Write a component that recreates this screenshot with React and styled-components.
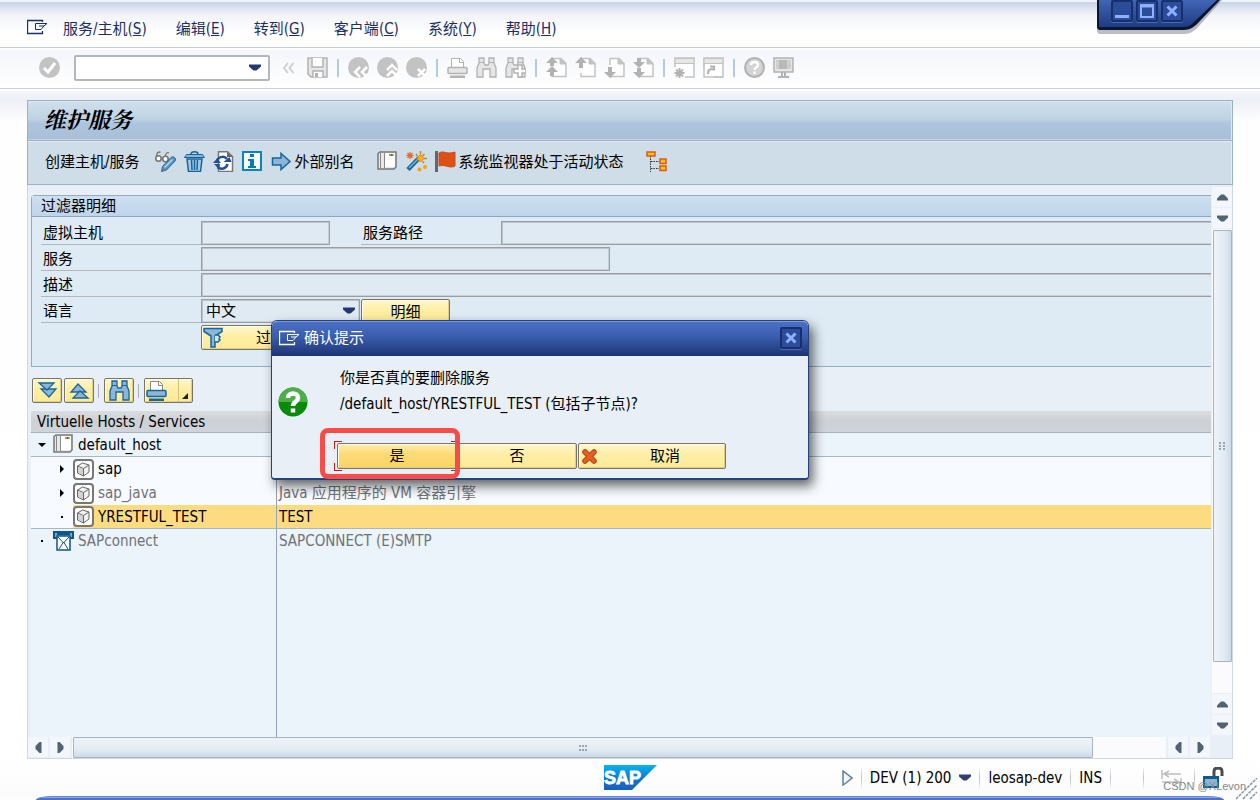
import React from "react";
import styled, { createGlobalStyle, css } from "styled-components";

const GlobalStyle = createGlobalStyle`
  * {
    box-sizing: border-box;
  }
  body {
    margin: 0;
    background: #fdfdfe;
  }
  body, button, input, select {
    font-family: "DejaVu Sans Condensed", "Noto Sans", "Noto Sans CJK SC", sans-serif;
    font-size: 15px;
    line-height: 20px;
    color: #000;
  }
  svg {
    display: block;
    flex: none;
  }
`;

const Screen = styled.div`
  position: relative;
  display: flex;
  flex-direction: column;
  min-height: 100vh;
  overflow: hidden;
`;

/* ---------- menu + system toolbar ---------- */

const MenuBar = styled.nav`
  display: flex;
  align-items: center;
  gap: 29px;
  height: 48px;
  padding: 8px 27px 0;
  border-top: 2px solid #eef3fa;
  border-bottom: 1px solid #c3cddd;
  background: linear-gradient(#c5d3e6, #dde3ee 6px, #f3f5fa 14px, #fff 32px);
  color: #1c2f63;

  > svg {
    margin: 0 -14px 4px 0;
  }
`;

const MenuItem = styled.button`
  padding: 0;
  border: 0;
  background: none;
  color: #1c2f63;
  white-space: nowrap;
`;

const SystemBar = styled.div`
  display: flex;
  align-items: center;
  gap: 8px;
  height: 39px;
  margin-top: 2px;
  padding: 0 39px 3px;
  border-bottom: 1px solid #c9d0df;
  background: linear-gradient(#f3f6fa, #fff);
`;

const IconButton = styled.button`
  display: flex;
  align-items: center;
  gap: 3px;
  margin-right: ${({ $after }) => $after || 0}px;
  padding: 0;
  border: 0;
  background: none;
  white-space: nowrap;
`;

const Divider = styled.span`
  width: 2px;
  height: 18px;
  margin: 0 1px;
  background: #b3cae3;
`;

const CommandBox = styled.label`
  display: flex;
  align-items: center;
  width: 196px;
  height: 26px;
  margin: 0 4px 0 6px;
  padding-right: 7px;
  border: 2px solid #b3b6ba;
  border-radius: 2px;
  background: #fff;

  input {
    flex: 1;
    min-width: 0;
    padding: 0 4px;
    border: 0;
    outline: 0;
    background: none;
  }
`;

const WindowControls = styled.div`
  position: absolute;
  top: 0;
  right: 38px;
  width: 126px;
  height: 36px;

  > svg {
    position: absolute;
    inset: 0;
  }
  > div {
    position: relative;
    display: flex;
    gap: 3px;
    padding-left: 15px;
  }
`;

const ControlButton = styled.button`
  display: flex;
  align-items: center;
  justify-content: center;
  width: 22px;
  height: 22px;
  padding: 0;
  border: 2px solid #17306b;
  border-radius: 2px;
  background: #2c4c99;
  box-shadow: 0 1px 0 #4669b8;
`;

/* ---------- main panel ---------- */

const Main = styled.main`
  display: flex;
  flex: 1;
  flex-direction: column;
  margin-top: 2px;
  padding: 9px 27px 0;
  background: linear-gradient(#f5f7fb, #eceff6 9px, #fefefe 30px, #fff);
`;

const TitleBar = styled.header`
  height: 41px;
  padding: 0 16px;
  border: 1px solid #9bb0ca;
  box-shadow: inset 0 1px 0 #dbe8f3, inset -1px 0 0 #dbe8f3, inset 0 -1px 0 #c5d5e6;
  background: linear-gradient(#d0e0ec, #bfd3e3 18px, #adc5dd 22px, #aabfd9);

  h1 {
    margin: 0;
    font-family: "Noto Serif CJK SC", "Noto Sans CJK SC", sans-serif;
    font-size: 22px;
    font-style: italic;
    font-weight: 700;
    line-height: 36px;
  }
`;

const AppBar = styled.div`
  display: flex;
  align-items: center;
  gap: 8px;
  height: 44px;
  padding: 0 17px 2px;
  border: solid #9bb0ca;
  border-width: 0 1px 1px;
  box-shadow: inset 0 1px 0 #e5edf4, inset -1px 0 0 #e5edf4;
  background: #cfdde8;
`;

const Content = styled.div`
  display: grid;
  flex: 1;
  grid-template-columns: 1fr 20px;
  grid-template-rows: 1fr 21px;
  border: solid #cfd7e5;
  border-width: 0 1px 1px;
  background: #e9eff7;
`;

const Pane = styled.div`
  display: flex;
  flex-direction: column;
  min-width: 0;
  padding: 10px 1px 0 3px;
`;

const FilterBox = styled.section`
  border: 1px solid #92adca;
  border-right: 0;
  border-top-left-radius: 4px;
  background: #deeaf4;

  h2 {
    height: 21px;
    margin: 0;
    padding-left: 9px;
    border-bottom: 1px solid #8aa6c6;
    background: linear-gradient(#cddff0, #bfd5ea);
    font-size: 15px;
    font-weight: 400;
    line-height: 20px;
  }
`;

const FilterForm = styled.form`
  display: flex;
  flex-direction: column;
  gap: 2px;
  padding: 4px 0 16px 9px;
`;

const FormRow = styled.div`
  display: flex;
  height: ${({ $last }) => ($last ? 25 : 24)}px;
  padding-left: ${({ $last }) => ($last ? 160 : 0)}px;
`;

const Label = styled.label`
  width: ${({ $width }) => $width || 160}px;
  margin-left: ${({ $width }) => ($width ? 31 : 0)}px;
  padding-left: 2px;
  border-bottom: 1px solid #b3b8bc;
  line-height: 25px;
`;

const fieldLook = css`
  border: 1px solid #9a9ea2;
  border-radius: 0;
  outline: 0;
  box-shadow: inset 1px 1px 0 #bcc3c9, inset -1px -1px 0 #c9d0d6;
  background: #dfeaf3;
`;

const Field = styled.input`
  ${fieldLook}
  width: ${({ $width }) => $width}px;
  min-width: 0;
  ${({ $fill }) =>
    $fill &&
    css`
      flex: 1;
      border-right: 0;
      box-shadow: inset 1px 1px 0 #bcc3c9, inset 0 -1px 0 #c9d0d6;
    `}
`;

const SelectBox = styled.div`
  ${fieldLook}
  display: flex;
  align-items: center;
  width: 159px;
  margin-right: 1px;
  padding-right: 4px;

  select {
    flex: 1;
    appearance: none;
    padding: 0 4px;
    border: 0;
    outline: 0;
    background: none;
  }
`;

const YellowButton = styled.button`
  display: flex;
  align-items: center;
  justify-content: center;
  width: ${({ $width }) => $width}px;
  height: ${({ $height }) => $height || 25}px;
  padding: 0;
  border: 1px solid #77756a;
  border-radius: 2px;
  box-shadow: inset 1px 1px 0 #fffbe6, inset -1px -1px 0 #e2cf83;
  background: ${({ $focus }) =>
    $focus
      ? "linear-gradient(#ffeeb0, #fddb77 40%, #fad461)"
      : "linear-gradient(#fff7cd, #ffeea4 45%, #feea97)"};

  span {
    flex: 1;
    padding-left: 8px;
  }
`;

const TreeTools = styled.div`
  display: flex;
  align-items: center;
  gap: 2px;
  margin: 11px 0 8px 1px;
`;

const ToolDivider = styled.span`
  width: 1px;
  height: 14px;
  margin: 0 3px 0 2px;
  background: #a9b2bc;
`;

const SplitButton = styled(YellowButton)`
  justify-content: flex-start;
  padding-left: 1px;

  svg:last-child {
    margin-left: auto;
  }
`;

const TreeArea = styled.div`
  flex: 1;
  background: linear-gradient(#93a2b8, #93a2b8) 245px 22px / 1px 100% no-repeat #ebf3fb;
`;

const TreeTable = styled.table`
  width: 100%;
  table-layout: fixed;
  border-spacing: 0;

  th {
    height: 22px;
    padding: 0 0 0 6px;
    border-bottom: 1px solid #a9b1bd;
    background: linear-gradient(#d9dcdf, #cdd1d6 50%, #cfd4da);
    font-weight: 400;
    text-align: left;
  }
  th:first-child {
    width: 246px;
  }
  td {
    height: 24px;
    padding: 0;
    color: #6f7276;
  }
  td:first-child {
    border-right: 1px solid #93a2b8;
  }
  td + td {
    padding-left: 2px;
  }
`;

const TreeRow = styled.tr`
  td {
    background: ${({ $level }) => ($level ? "#f7fafe" : "#ebf3fb")};
    border-bottom: ${({ $line }) => ($line ? "1px solid #a3b7cf" : "0")};
    ${({ $active }) => $active && "color: #000;"}
  }
  td + td {
    ${({ $selected }) => $selected && "background: #fddc81;"}
  }
`;

const TreeNode = styled.div`
  display: flex;
  padding-left: ${({ $level }) => $level * 20}px;
`;

const Marker = styled.span`
  display: flex;
  align-items: center;
  justify-content: center;
  width: 22px;
`;

const NodeLabel = styled.span`
  display: flex;
  flex: 1;
  align-items: center;
  gap: 4px;
  height: 23px;
  background: ${({ $selected }) => ($selected ? "#fddc81" : "none")};
`;

/* ---------- scroll bars ---------- */

const ScrollColumn = styled.div`
  display: flex;
  flex-direction: column;
  gap: 1px;
  padding: 2px 0;
`;

const ScrollRow = styled.div`
  display: flex;
  gap: 2px;
  padding-right: 2px;
`;

const ScrollButton = styled.button`
  display: flex;
  flex: none;
  align-items: center;
  justify-content: center;
  width: 20px;
  height: 20px;
  padding: 0;
  border: 0;
  background: #f3f6fb;
`;

const Track = styled.div`
  display: flex;
  flex: 1;
  flex-direction: ${({ $vertical }) => ($vertical ? "column" : "row")};
  padding: ${({ $vertical }) => ($vertical ? "1px 0 0 1px" : "0 0 0 1px")};
  background: #fbfbfd;

  &::after {
    content: "";
    flex: 1;
  }
`;

const Thumb = styled.div`
  display: flex;
  flex: 14;
  align-items: center;
  justify-content: center;
  border: 1px solid #a7b3bf;
  border-radius: 1px;
  background: linear-gradient(
    ${({ $vertical }) => ($vertical ? "90deg" : "180deg")},
    #eef4f8,
    #e3ebf3 60%,
    #ccdbe6
  );
`;

/* ---------- status bar ---------- */

const StatusBar = styled.footer`
  display: grid;
  grid-template-columns: 1fr auto 1fr;
  align-items: center;
  height: 37px;
  background: linear-gradient(#fff, #fbfbfc);
`;

const StatusItems = styled.div`
  display: flex;
  grid-column: 3;
  align-items: center;
  justify-content: flex-end;
  gap: 8px;
  padding-right: 36px;
  white-space: nowrap;
`;

const StatusDivider = styled.span`
  width: 1px;
  height: 20px;
  margin-left: ${({ $before }) => $before || 0}px;
  background: linear-gradient(#eef0f3, #bcc2ca, #eef0f3);
`;

const BottomEdge = styled.div`
  height: 4px;
  margin: 0 36px;
  border-top: 1px solid #6888d4;
  border-radius: 16px 16px 0 0 / 4px 4px 0 0;
  background: linear-gradient(#8fa9e6 1px, #4d70c8 1px);
`;

const Watermark = styled.span`
  position: absolute;
  right: 14px;
  bottom: 7px;
  font-family: "Liberation Sans", sans-serif;
  font-size: 11px;
  line-height: 14px;
  color: #85898e;
`;

const ResizeGrip = styled.svg`
  position: absolute;
  right: 2px;
  bottom: 0;
`;

/* ---------- dialog ---------- */

const Dialog = styled.div`
  position: absolute;
  top: 320px;
  left: 271px;
  width: 538px;
  border: 1px solid #24427d;
  border-bottom-width: 2px;
  border-radius: 6px 6px 4px 4px;
  box-shadow: 4px 6px 12px rgba(0, 0, 0, 0.6);
  background: #e8eff6;
`;

const DialogHeader = styled.div`
  display: flex;
  align-items: center;
  gap: 4px;
  height: 35px;
  padding: 0 7px 2px;
  border-top: 1px solid #7b9bdf;
  border-radius: 5px 5px 0 0;
  background: linear-gradient(#4a6fc4, #3a5cac 45%, #1c3473);
  color: #fff;

  h2 {
    flex: 1;
    margin: 0;
    font-size: 15px;
    font-weight: 400;
  }
  button {
    margin-right: -1px;
  }
`;

const DialogMessage = styled.div`
  display: flex;
  align-items: flex-end;
  gap: 32px;
  padding: 9px 6px 26px;

  p {
    margin: 0;
    line-height: 26px;
  }
`;

const DialogActions = styled.div`
  display: flex;
  padding: 0 0 9px 64px;

  button:last-child {
    margin-left: 1px;
  }
`;

const tick = "linear-gradient(#d01818, #d01818)";

const FocusFrame = styled.div`
  position: relative;

  &::before {
    content: "";
    position: absolute;
    inset: -2px;
    background: ${tick} 0 0 / 8px 1px, ${tick} 0 0 / 1px 8px, ${tick} 100% 0 / 8px 1px,
      ${tick} 100% 0 / 1px 8px, ${tick} 0 100% / 8px 1px, ${tick} 0 100% / 1px 8px,
      ${tick} 100% 100% / 8px 1px, ${tick} 100% 100% / 1px 8px;
    background-repeat: no-repeat;
    pointer-events: none;
  }
  &::after {
    content: "";
    position: absolute;
    inset: -15px -3px -10px -16px;
    border: 5px solid #f94b48;
    border-radius: 8px;
    pointer-events: none;
  }
`;

/* ---------- icons ---------- */

const Icon = ({ size = 21, width, height, children, ...rest }) => (
  <svg
    width={width || size}
    height={height || size}
    viewBox={`0 0 ${width || size} ${height || size}`}
    fill="none"
    aria-hidden="true"
    {...rest}
  >
    {children}
  </svg>
);

const G = "#c3c3c3";
const D = "#b2b2b2";
const L = "#e6e6e6";

const ExitIcon = () => (
  <Icon width={21} height={16} stroke="currentColor">
    <path d="M15.500 3V1.500H.5v13h15V12" strokeWidth="1.300" />
    <path d="M20 4.500H8.500v6H14l3-3.500M20 4.500L17 7h-5" />
  </Icon>
);

const turns = { down: 0, up: 180, left: 90, right: 270 };

const Arrow = ({ dir = "down", color = "#4f6372", w = 11 }) => (
  <Icon size={w}>
    <path
      d={`M0 2.500h${w}v2L${w / 2 + 1.5} 8.500h-3L0 4.500z`}
      fill={color}
      transform={`rotate(${turns[dir]} ${w / 2} ${w / 2})`}
    />
  </Icon>
);

const CheckIcon = () => (
  <Icon>
    <circle cx="10.500" cy="10.500" r="10.500" fill={G} />
    <path d="M5 11l4 4 7-9" stroke="#fff" strokeWidth="3" />
  </Icon>
);

const BackMark = () => (
  <Icon width={13} height={12} stroke="#d0d0d0" strokeWidth="2">
    <path d="M6 1L2 6l4 5M11.500 1l-4 5 4 5" />
  </Icon>
);

const SaveIcon = () => (
  <Icon>
    <path d="M1 1h19v19H4l-3-3z" fill={L} stroke={D} strokeWidth="1.500" />
    <path d="M5 1v9h11V1" fill="#fff" stroke={D} strokeWidth="1.500" />
    <path d="M6 20v-6h10v6" fill="#fff" stroke={D} strokeWidth="1.500" />
    <path d="M8 16h3v4H8z" fill={D} />
  </Icon>
);

const RoundIcon = ({ kind }) => (
  <Icon>
    <circle cx="10.500" cy="10.500" r="10.500" fill={G} />
    <g stroke="#fff" strokeWidth="2.500">
      {kind === "back" && <path d="M12 10l-5 5 5 5M19 10l-5 5 5 5" />}
      {kind === "up" && <path d="M10 13l5-5 5 5M10 19l5-5 5 5" />}
      {kind === "cancel" && <path d="M12 12l7 7M19 12l-7 7" />}
    </g>
  </Icon>
);

const PrintIcon = ({ line = D, fill = L, base = D }) => (
  <Icon>
    <path d="M4.500 11V1.500h9l3 3V11" fill="#fff" stroke={line === D ? D : "#888"} />
    <path d="M12.500 1.500v4h4" stroke={line === D ? D : "#888"} />
    <rect x="1" y="10.500" width="19" height="6" rx="1" fill={fill} stroke={line} strokeWidth="1.500" />
    <path d="M3 18.500h15V21H3z" fill={base} />
  </Icon>
);

const FindIcon = ({ line = D, fill = L, plus }) => (
  <Icon>
    <path
      d="M3 1h5v5l1 2h3l1-2V1h5v5l2 5v9h-6v-8H7v8H1v-9l2-5z"
      fill={fill}
      stroke={line}
      strokeWidth="1.300"
    />
    <path d="M3 5.500h5M13 5.500h5" stroke={line} />
    {plus && <path d="M13 8h4v4h4v4h-4v4h-4v-4H9v-4h4z" fill="#fff" stroke={D} strokeWidth="1.500" />}
  </Icon>
);

const PageIcon = ({ kind }) => (
  <Icon>
    <path d="M6 8V1.500h9l5 5V19.500H6V16" fill="#fff" stroke={G} strokeWidth="1.500" />
    <path d="M14 1v6h6z" fill={G} stroke={G} />
    <g fill={D}>
      {kind === "first" && <path d="M6 0l6 6H8v3h4H0h4V6H0zM6 9l6 6H8v4H4v-4H0z" />}
      {kind === "prev" && <path d="M6 0l6 6H8v5H4V6H0z" />}
      {kind === "next" && <path d="M6 21l6-6H8v-5H4v5H0z" />}
      {kind === "last" && <path d="M4 1h4v4h4l-6 6-6-6h4zM4 11h4v4h4l-6 6-6-6h4z" />}
    </g>
  </Icon>
);

const SessionIcon = ({ link }) => (
  <Icon>
    <path d="M1 10V1h19v19H11" fill="#fff" stroke={G} strokeWidth="1.500" />
    <path d="M1 1.500h19v5H1z" fill={L} stroke={G} />
    {link ? (
      <>
        <path d="M1 7v13h19" stroke={G} strokeWidth="1.500" />
        <path d="M5 17c0-4 1-5 5-5M7 9.500h4v4" stroke={D} strokeWidth="2.200" />
      </>
    ) : (
      <path d="M5.500 11v10M.5 16h10M2 12.500l7 7M9 12.500l-7 7" stroke={D} strokeWidth="2" />
    )}
  </Icon>
);

const HelpIcon = () => (
  <Icon>
    <circle cx="10.500" cy="10.500" r="9.500" fill="#d4d4d4" stroke={D} strokeWidth="2" />
    <path d="M7 8c0-4 7-4 7 0 0 2.500-3.500 2.500-3.500 5M10.500 14.500v2.500" stroke="#fff" strokeWidth="2.500" />
  </Icon>
);

const MonitorIcon = () => (
  <Icon>
    <rect x="1" y="1" width="19" height="14" fill={L} stroke={D} strokeWidth="1.500" />
    <rect x="3" y="3" width="15" height="9" fill="#b9b9b9" />
    <path d="M3 3h3v9H3zM14 3h4v9h-4z" fill="#cfcfcf" />
    <path d="M9 15v4M12 15v4M5 20h11" stroke={D} strokeWidth="2" />
  </Icon>
);

const BLUE = "#17669a";
const SKY = "#8db5d8";

const DisplayChangeIcon = () => (
  <Icon>
    <path d="M1.500 6c0-4 1-5 4-5M10 6c1-4 2-5 4-4" stroke="#777" strokeWidth="1.300" />
    <circle cx="3.500" cy="7.500" r="2.700" fill="#fff" stroke="#777" strokeWidth="1.600" />
    <circle cx="10.500" cy="8" r="2.700" fill="#fff" stroke="#777" strokeWidth="1.600" />
    <path d="M7.500 15.500l8.500-9c2-2 6 1 4 3.500L11.500 19l-5 1.500z" fill="#5c97c3" stroke={BLUE} />
    <path d="M9.500 16.500l8-8" stroke="#b8d3e8" strokeWidth="1.500" />
    <path d="M6.500 20.500l1-4 3 3z" fill="#777" />
  </Icon>
);

const TrashIcon = () => (
  <Icon stroke={BLUE}>
    <path d="M7 3c0-3 7-3 7 0" strokeWidth="1.500" />
    <path d="M.5 6.500l2-3h16l2 3z" fill={SKY} />
    <path d="M3 8h15l-1.500 12.500h-12z" fill="#a9c8e0" strokeWidth="1.500" />
    <path d="M7.500 9l.5 10M10.500 9v10M13.500 9l-.5 10" strokeWidth="1.500" />
  </Icon>
);

const RefreshIcon = () => (
  <Icon>
    <path d="M5.500.8h9l5 4.700v15h-14z" fill="#fff" stroke="#777" strokeWidth="1.500" />
    <path d="M14 1v5h5.500z" fill="#666" />
    <path d="M4 11c0-5 7-7 10-3M14.500 13c-1 5-7 6-10 3" stroke="#24509b" strokeWidth="2.500" />
    <path d="M10.500 11h8l-2-5zM0 12h8l-4-4.500zM1 13h6l-1 5z" fill="#24509b" />
  </Icon>
);

const InfoIcon = () => (
  <Icon>
    <rect x="1" y="1" width="18" height="18" fill="#f8fbfd" stroke="#0a84bd" strokeWidth="2" />
    <path d="M8 3h4v3H8zM6 8h6v7h2v2H6v-2h2v-5H6z" fill="#0a7ab3" />
  </Icon>
);

const ArrowRightIcon = () => (
  <Icon>
    <path d="M1.500 7H10V2.500l9 8-9 8V14H1.500z" fill={SKY} stroke={BLUE} strokeWidth="1.500" />
  </Icon>
);

const ServerIcon = () => (
  <Icon>
    <path d="M1 2.500L3 1h16v15l-2 2H1z" fill="#e8e8e8" stroke="#777" strokeWidth="1.500" />
    <path d="M8 2h10v14H8z" fill="#fff" />
    <path d="M3.500 2v15M7.500 2v15" stroke="#888" />
    <path d="M12 3h1.500v2H12z" fill="#f80" />
    <path d="M13.500 3H15v2h-1.500z" fill="#e22" />
    <path d="M15 3h1.500v2H15z" fill="#3b3" />
  </Icon>
);

const WandIcon = () => (
  <Icon>
    <path d="M2 18.500L13 7" stroke={BLUE} strokeWidth="4.500" />
    <path d="M3 17L12 8" stroke="#7fb0d6" strokeWidth="1.500" />
    <path d="M4 1v7M.5 4.500h7M1.500 2l5 5M6.500 2l-5 5" stroke="#e0702c" strokeWidth="1.300" />
    <path d="M14.500 0v3M18.500 3l-2 2M21 7.500h-3M18 12l-1.500-1.500M10 3l1.500 2" stroke="#b78a3a" strokeWidth="1.500" />
    <path d="M14.500 3.500l3.500 4-3.500 3.500L11 7.500z" fill="#ffb400" stroke="#ee7a1c" />
    <circle cx="19" cy="16" r="2" fill="#f6a313" />
    <circle cx="13.500" cy="18.500" r="2" fill="#f6a313" />
  </Icon>
);

const FlagIcon = () => (
  <Icon>
    <path d="M1.500 0v21" stroke="#666" strokeWidth="3" />
    <path d="M4 2c5-3 7 2 16-1v14c-6 3-9-2-16 0z" fill="#dd5016" stroke="#c84a1c" />
  </Icon>
);

const HierarchyIcon = () => (
  <Icon fill="#ffc20a">
    <path d="M4.500 5v16M5 10.500h8M5 17.500h8" stroke="#333" strokeDasharray="1.500 1" fill="none" />
    <g stroke="#dd5a16" strokeWidth="1.500">
      <rect x="1" y="1" width="8" height="4" />
      <rect x="14" y="8" width="6" height="4.500" />
      <rect x="14" y="15" width="6" height="4.500" />
    </g>
  </Icon>
);

const FilterIcon = () => (
  <Icon stroke={BLUE} strokeWidth="1.500">
    <path d="M1 1.500h18v3L12 9v11H8V9L1 4.500z" fill={SKY} />
    <path d="M12 8h3l2 2-1 2 1 1-2 2h-3" fill="#d6e6f1" />
  </Icon>
);

const ExpandIcon = ({ up }) => (
  <Icon fill={SKY} stroke={BLUE} strokeWidth="1.300">
    <g transform={up ? "rotate(180 10.500 10.500)" : undefined}>
      <path d="M4 9h15l-7 8z" />
      <path d="M2 3h15l-7 7z" />
    </g>
  </Icon>
);

const CubeIcon = () => (
  <Icon>
    <rect x="1" y="1" width="19" height="19" rx="3" fill="#fff" stroke="#777" strokeWidth="2" />
    <path d="M4.500 7l5-3 6.500 2v7l-5.500 4-6-3z" fill="#f1f1f1" stroke="#666" />
    <path d="M4.500 7l6 2.500L16 6M10.500 9.500V17" stroke="#666" />
    <path d="M5 8l5 2v6l-5-2.500z" fill="#d2d2d2" />
  </Icon>
);

const ConnectIcon = () => (
  <Icon>
    <path d="M1 1h19v6H1z" fill="#85a9c6" stroke="#0f5687" strokeWidth="2" />
    <path d="M4 5h13v14H4z" fill="#fff" stroke="#0f5687" strokeWidth="1.500" />
    <path d="M5 6l5.500 6L16 6M6 18l4.500-7L15 18" stroke="#0f5687" />
    <path d="M4 3h13" stroke="#0f5687" strokeWidth="2" />
  </Icon>
);

const CloseGlyph = () => (
  <Icon size={12} stroke="#8fb0ff" strokeWidth="3">
    <path d="M1.500 1.500l9 9M10.500 1.500l-9 9" />
  </Icon>
);

const QuestionIcon = () => (
  <Icon size={30}>
    <circle cx="15" cy="15" r="14.500" fill="#0a8a0a" />
    <path d="M.5 15a14.500 14.500 0 0 1 29 0z" fill="#4fae4c" />
    <path d="M10 11c0-6 10-6 10 0 0 4-5 3.500-5 8M15 21.500v4" stroke="#fff" strokeWidth="4.500" />
  </Icon>
);

const CancelIcon = () => (
  <Icon size={15} strokeLinecap="round">
    <path d="M3 3l9 9M12 3l-9 9" stroke="#b8421c" strokeWidth="5.500" />
    <path d="M3 3l9 9M12 3l-9 9" stroke="#e2611f" strokeWidth="3.500" />
  </Icon>
);

const Gripper = ({ vertical }) => (
  <Icon width={9} height={9} fill="#98a5b2">
    <g transform={vertical ? "rotate(90 4.500 4.500)" : undefined}>
      <path d="M0 2h2v2H0zM3 2h2v2H3zM6 2h2v2H6zM0 6h2v2H0zM3 6h2v2H3zM6 6h2v2H6z" />
    </g>
  </Icon>
);

const SapLogo = () => (
  <svg width="53" height="25" viewBox="0 0 53 25" role="img" aria-label="SAP">
    <defs>
      <linearGradient id="sap" x1="0" y1="0" x2="0" y2="1">
        <stop offset="0" stopColor="#06b5ee" />
        <stop offset="0.600" stopColor="#0f74c8" />
        <stop offset="1" stopColor="#1d5fbd" />
      </linearGradient>
    </defs>
    <path d="M0 0h53L28 25H0z" fill="url(#sap)" />
    <text
      x="0"
      y="19"
      fill="#fff"
      stroke="#fff"
      strokeWidth="0.800"
      fontFamily="Liberation Sans, sans-serif"
      fontWeight="700"
      fontSize="18"
    >
      SAP
    </text>
  </svg>
);

const PlayIcon = () => (
  <Icon width={11} height={16}>
    <path d="M1 1v14l3-2 6-5z" fill="#f1f4f8" stroke="#5f7f9f" strokeWidth="1.500" />
  </Icon>
);

const TransferIcon = () => (
  <Icon width={21} height={18} stroke="#bdbdbd" strokeWidth="1.500">
    <path d="M1 1v9M2 5h18M8 2L3 5l5 3M20 9v8M1 13h17M13 10l5 3-5 3" />
  </Icon>
);

const LockIcon = () => (
  <Icon>
    <path d="M11 9V4c0-4 8-4 8 0v5" stroke="#4d4d4d" strokeWidth="3" />
    <rect x="1" y="10" width="14" height="10" fill="#8db5d8" stroke="#0d5c8c" strokeWidth="2" />
    <path d="M1 11h14" stroke="#0d5c8c" strokeWidth="2" />
  </Icon>
);

/* ---------- data ---------- */

const menus = [
  ["服务/主机", "S"],
  ["编辑", "E"],
  ["转到", "G"],
  ["客户端", "C"],
  ["系统", "Y"],
  ["帮助", "H"],
];

const systemTools = [
  ["保存", <SaveIcon />],
  null,
  ["返回", <RoundIcon kind="back" />],
  ["退出", <RoundIcon kind="up" />],
  ["取消", <RoundIcon kind="cancel" />],
  null,
  ["打印", <PrintIcon />],
  ["查找", <FindIcon />],
  ["继续查找", <FindIcon plus />],
  null,
  ["首页", <PageIcon kind="first" />],
  ["上一页", <PageIcon kind="prev" />],
  ["下一页", <PageIcon kind="next" />],
  ["末页", <PageIcon kind="last" />],
  null,
  ["新建会话", <SessionIcon />],
  ["创建快捷方式", <SessionIcon link />],
  null,
  ["帮助", <HelpIcon />],
  ["布局", <MonitorIcon />],
];

const nodes = [
  { name: "default_host", level: 0, mark: "down", icon: <ServerIcon />, active: true, line: true },
  { name: "sap", level: 1, mark: "right", icon: <CubeIcon />, active: true },
  { name: "sap_java", level: 1, mark: "right", icon: <CubeIcon />, text: "Java 应用程序的 VM 容器引擎" },
  { name: "YRESTFUL_TEST", level: 1, icon: <CubeIcon />, text: "TEST", active: true, selected: true, line: true },
  { name: "SAPconnect", level: 0, icon: <ConnectIcon />, text: "SAPCONNECT (E)SMTP" },
];

const NodeMark = ({ mark }) => (
  <Icon size={8} fill="#000">
    {mark === "down" && <path d="M0 2h8L4 6z" />}
    {mark === "right" && <path d="M2 0v8l4-4z" />}
    {!mark && <path d="M3 3h2v2H3z" />}
  </Icon>
);

const ScrollPair = ({ dirs }) =>
  dirs.map((dir) => (
    <ScrollButton key={dir} aria-label={dir}>
      <Arrow dir={dir} />
    </ScrollButton>
  ));

const ConfirmDialog = () => (
  <Dialog role="dialog" aria-label="确认提示">
    <DialogHeader>
      <ExitIcon />
      <h2>确认提示</h2>
      <ControlButton aria-label="关闭">
        <CloseGlyph />
      </ControlButton>
    </DialogHeader>
    <DialogMessage>
      <QuestionIcon />
      <p>
        你是否真的要删除服务
        <br />
        /default_host/YRESTFUL_TEST (包括子节点)?
      </p>
    </DialogMessage>
    <DialogActions>
      <FocusFrame>
        <YellowButton $width={120} $height={26} $focus>
          是
        </YellowButton>
      </FocusFrame>
      <YellowButton $width={120} $height={26}>
        否
      </YellowButton>
      <YellowButton $width={148} $height={26}>
        <Icon size={3} />
        <CancelIcon />
        <span>取消</span>
      </YellowButton>
    </DialogActions>
  </Dialog>
);

const App = () => {
  return (
    <Screen>
      <GlobalStyle />
      <MenuBar>
        <ExitIcon />
        {menus.map(([name, key]) => (
          <MenuItem key={key}>
            {name}(<u>{key}</u>)
          </MenuItem>
        ))}
      </MenuBar>
      <WindowControls>
        <Icon width={126} height={36}>
          <path d="M1 0v32l2 2h86c6 0 10-4 14-8L126 0z" fill="#000" opacity="0.250" />
          <path d="M1 0v28l2 2h85c6 0 10-3 14-7L124 0z" fill="#0b1636" />
          <path d="M3 0v27h85c5 0 8-3 11-6L121 0z" fill="url(#tab)" />
          <defs>
            <linearGradient id="tab" x1="0" y1="0" x2="0" y2="1">
              <stop offset="0" stopColor="#4166b5" />
              <stop offset="1" stopColor="#1f3b80" />
            </linearGradient>
          </defs>
        </Icon>
        <div>
          <ControlButton aria-label="最小化">
            <Icon size={14}>
              <path d="M0 12.500h14" stroke="#8fb0ff" strokeWidth="3" />
            </Icon>
          </ControlButton>
          <ControlButton aria-label="最大化">
            <Icon size={14}>
              <path d="M1 1h12v12H1zM1 2.500h12" stroke="#8fb0ff" strokeWidth="2" />
            </Icon>
          </ControlButton>
          <ControlButton aria-label="关闭窗口">
            <CloseGlyph />
          </ControlButton>
        </div>
      </WindowControls>

      <SystemBar>
        <IconButton aria-label="回车">
          <CheckIcon />
        </IconButton>
        <CommandBox>
          <input aria-label="命令" />
          <Arrow color="#233a70" w={12} />
        </CommandBox>
        <IconButton aria-label="收起" $after={4}>
          <BackMark />
        </IconButton>
        {systemTools.map((tool, i) =>
          tool ? (
            <IconButton key={i} aria-label={tool[0]}>
              {tool[1]}
            </IconButton>
          ) : (
            <Divider key={i} />
          )
        )}
      </SystemBar>

      <Main>
        <TitleBar>
          <h1>维护服务</h1>
        </TitleBar>
        <AppBar>
          <IconButton $after={7}>创建主机/服务</IconButton>
          <IconButton aria-label="显示/更改">
            <DisplayChangeIcon />
          </IconButton>
          <IconButton aria-label="删除">
            <TrashIcon />
          </IconButton>
          <IconButton aria-label="刷新">
            <RefreshIcon />
          </IconButton>
          <IconButton aria-label="信息">
            <InfoIcon />
          </IconButton>
          <IconButton $after={14}>
            <ArrowRightIcon />
            外部别名
          </IconButton>
          <IconButton aria-label="主机">
            <ServerIcon />
          </IconButton>
          <IconButton aria-label="向导">
            <WandIcon />
          </IconButton>
          <IconButton $after={14}>
            <FlagIcon />
            系统监视器处于活动状态
          </IconButton>
          <IconButton aria-label="层次结构">
            <HierarchyIcon />
          </IconButton>
        </AppBar>

        <Content>
          <Pane>
            <FilterBox>
              <h2>过滤器明细</h2>
              <FilterForm>
                <FormRow>
                  <Label htmlFor="host">虚拟主机</Label>
                  <Field id="host" $width={129} />
                  <Label htmlFor="path" $width={140}>
                    服务路径
                  </Label>
                  <Field id="path" $fill />
                </FormRow>
                <FormRow>
                  <Label htmlFor="service">服务</Label>
                  <Field id="service" $width={409} />
                </FormRow>
                <FormRow>
                  <Label htmlFor="desc">描述</Label>
                  <Field id="desc" $fill />
                </FormRow>
                <FormRow>
                  <Label htmlFor="lang">语言</Label>
                  <SelectBox>
                    <select id="lang" defaultValue="zh">
                      <option value="zh">中文</option>
                    </select>
                    <Arrow color="#233a70" w={12} />
                  </SelectBox>
                  <YellowButton type="button" $width={89}>
                    明细
                  </YellowButton>
                </FormRow>
                <FormRow $last>
                  <YellowButton type="button" $width={110}>
                    <Icon size={1} />
                    <FilterIcon />
                    <span>过滤</span>
                  </YellowButton>
                </FormRow>
              </FilterForm>
            </FilterBox>

            <TreeTools>
              <YellowButton $width={30} aria-label="展开">
                <ExpandIcon />
              </YellowButton>
              <YellowButton $width={30} aria-label="折叠">
                <ExpandIcon up />
              </YellowButton>
              <ToolDivider />
              <YellowButton $width={30} aria-label="查找">
                <FindIcon line={BLUE} fill={SKY} />
              </YellowButton>
              <ToolDivider />
              <SplitButton $width={49} aria-label="打印">
                <PrintIcon line={BLUE} fill={SKY} base={BLUE} />
                <Icon width={15} height={23}>
                  <path d="M1.500 0v23" stroke="#d5c478" />
                  <path d="M11 14v6H5z" fill="#222" />
                </Icon>
              </SplitButton>
            </TreeTools>

            <TreeArea>
              <TreeTable>
                <thead>
                  <tr>
                    <th>Virtuelle Hosts / Services</th>
                    <th aria-label="描述" />
                  </tr>
                </thead>
                <tbody>
                  {nodes.map((node) => (
                    <TreeRow
                      key={node.name}
                      $level={node.level}
                      $active={node.active}
                      $selected={node.selected}
                      $line={node.line}
                    >
                      <td>
                        <TreeNode $level={node.level}>
                          <Marker>
                            <NodeMark mark={node.mark} />
                          </Marker>
                          <NodeLabel $selected={node.selected}>
                            {node.icon}
                            {node.name}
                          </NodeLabel>
                        </TreeNode>
                      </td>
                      <td>{node.text}</td>
                    </TreeRow>
                  ))}
                </tbody>
              </TreeTable>
            </TreeArea>
          </Pane>

          <ScrollColumn>
            <ScrollPair dirs={["up", "down"]} />
            <Track $vertical>
              <Thumb $vertical>
                <Gripper vertical />
              </Thumb>
            </Track>
            <ScrollPair dirs={["up", "down"]} />
          </ScrollColumn>

          <ScrollRow>
            <ScrollPair dirs={["left", "right"]} />
            <Track>
              <Thumb>
                <Gripper />
              </Thumb>
            </Track>
            <ScrollPair dirs={["left", "right"]} />
          </ScrollRow>
        </Content>
      </Main>

      <StatusBar>
        <span />
        <SapLogo />
        <StatusItems>
          <PlayIcon />
          <StatusDivider />
          <span>DEV (1) 200</span>
          <Arrow color="#33406f" w={12} />
          <StatusDivider />
          <span>leosap-dev</span>
          <StatusDivider />
          <span>INS</span>
          <StatusDivider />
          <StatusDivider $before={24} />
          <Icon size={1} />
          <TransferIcon />
          <StatusDivider $before={4} />
          <LockIcon />
        </StatusItems>
      </StatusBar>
      <BottomEdge />
      <ResizeGrip width="22" height="22" viewBox="0 0 22 22" stroke="#8693a8" strokeWidth="1.500" strokeDasharray="3 1">
        <path d="M0 21L21 0M7 21L21 7M14 21l7-7" />
      </ResizeGrip>
      <Watermark>CSDN @XLevon</Watermark>

      <ConfirmDialog />
    </Screen>
  );
};

export default App;
